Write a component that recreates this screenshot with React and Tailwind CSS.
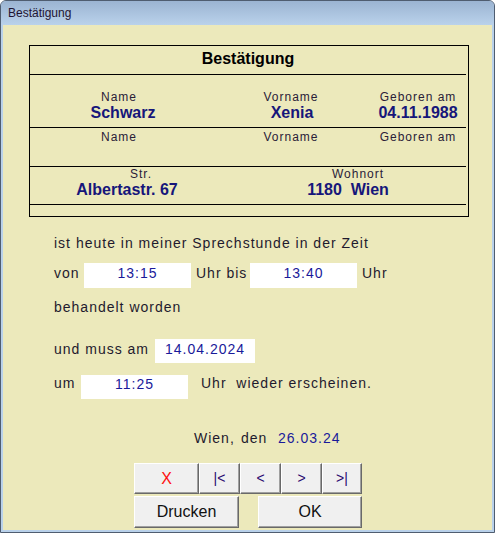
import React from 'react';

// ============================================
// BESTÄTIGUNG DIALOG
// ============================================

const FONT = { fontFamily: "'Liberation Sans', Arial, sans-serif" };

function Cell({ w, className = '', children }) {
  return (
    <div className={`shrink-0 text-center whitespace-pre ${w} ${className}`}>{children}</div>
  );
}

function Label({ w, children }) {
  return (
    <Cell w={w} className="text-[12px] leading-[13px] tracking-[1px] text-[#2a2038]">
      {children}
    </Cell>
  );
}

function Value({ w, children }) {
  return (
    <Cell w={w} className="text-[16px] leading-[18px] font-bold text-[#16167a]">
      {children}
    </Cell>
  );
}

function Field({ w, pt = 'pt-[2px]', h = 'h-[25px]', children }) {
  return (
    <div className={`shrink-0 bg-white text-center text-[14px] leading-[16px] tracking-[1px] text-[#1a1a9a] ${w} ${h} ${pt}`}>
      {children}
    </div>
  );
}

function Btn({ w, h, className = '', children }) {
  return (
    <button
      className={`shrink-0 bg-[#f0f0f0] border-t border-l border-white border-r border-b border-r-[#696969] border-b-[#696969] shadow-[inset_-1px_-1px_0_#a0a0a0] flex items-center justify-center ${w} ${h} ${className}`}
    >
      {children}
    </button>
  );
}

export default function App() {
  return (
    <div
      className="w-[495px] h-[533px] flex flex-col bg-[#b9d1ea] border border-[#4f5d70] rounded-t-[6px] overflow-hidden"
      style={FONT}
    >
      {/* title bar */}
      <div className="h-[24px] shrink-0 flex items-center px-[7px] bg-gradient-to-b from-[#9bb4d2] to-[#bad2eb]">
        <span className="text-[12px] text-[#1e1432]">Bestätigung</span>
      </div>

      {/* client area */}
      <div className="flex-1 mx-[2px] mb-[2px] bg-[#ece9bb] text-[#1f1a2e]">
        {/* header table */}
        <div className="ml-[26px] mt-[20px] w-[440px] h-[172px] border border-black flex flex-col">
          <div className="h-[29px] mr-[2px] border-b border-black flex items-center justify-center pb-[2px]">
            <span className="text-[16px] font-bold text-black">Bestätigung</span>
          </div>

          <div className="h-[53px] mr-[2px] border-b border-black pt-[16px]">
            <div className="flex">
              <Label w="w-[178px]">Name</Label>
              <Label w="w-[166px]">Vorname</Label>
              <Label w="w-[88px]">Geboren am</Label>
            </div>
            <div className="flex">
              <Value w="w-[186px]">Schwarz</Value>
              <Value w="w-[152px]">Xenia</Value>
              <Value w="w-[100px]">04.11.1988</Value>
            </div>
          </div>

          <div className="h-[39px] mr-[2px] border-b border-black pt-[3px]">
            <div className="flex">
              <Label w="w-[178px]">Name</Label>
              <Label w="w-[166px]">Vorname</Label>
              <Label w="w-[88px]">Geboren am</Label>
            </div>
          </div>

          <div className="h-[38px] mr-[2px] border-b border-black pt-[1px]">
            <div className="flex">
              <Label w="w-[222px]">Str.</Label>
              <Label w="w-[212px]">Wohnort</Label>
            </div>
            <div className="flex">
              <Value w="w-[194px]">Albertastr. 67</Value>
              <Value w="w-[248px]">{'1180  Wien'}</Value>
            </div>
          </div>

          <div className="flex-1" />
        </div>

        {/* text body */}
        <div className="pl-[51px] text-[14px] leading-[16px] tracking-[1px] whitespace-pre">
          <div className="mt-[18px] h-[16px]">ist heute in meiner Sprechstunde in der Zeit</div>

          <div className="mt-[12px] flex items-start h-[25px]">
            <span className="w-[30px] mt-[2px] shrink-0">von</span>
            <Field w="w-[107px]">13:15</Field>
            <span className="w-[54px] ml-[5px] mt-[2px] shrink-0">Uhr bis</span>
            <Field w="w-[107px]">13:40</Field>
            <span className="ml-[5px] mt-[2px]">Uhr</span>
          </div>

          <div className="mt-[11px] h-[16px]">behandelt worden</div>

          <div className="mt-[24px] flex items-start h-[24px]">
            <span className="w-[101px] mt-[2px] shrink-0">und muss am</span>
            <Field w="w-[100px]" h="h-[24px]">14.04.2024</Field>
          </div>

          <div className="mt-[12px] flex items-start h-[24px]">
            <span className="w-[27px] shrink-0">um</span>
            <Field w="w-[107px]" h="h-[24px]" pt="pt-[1px]">11:25</Field>
            <span className="ml-[13px]">{'Uhr  wieder erscheinen.'}</span>
          </div>

          <div className="mt-[31px] h-[16px] flex pl-[140px]">
            <span className="w-[47px] shrink-0">Wien,</span>
            <span className="w-[37px] shrink-0">den</span>
            <span className="text-[#1a1a9a]">26.03.24</span>
          </div>
        </div>

        {/* buttons */}
        <div className="ml-[131px] mt-[17px] flex flex-col gap-[2px]">
          <div className="flex">
            <Btn w="w-[65px]" h="h-[31px]" className="text-[16px] text-[#ff1010]">X</Btn>
            <Btn w="w-[41px]" h="h-[31px]" className="text-[14px] text-[#2a0a70]">|&lt;</Btn>
            <Btn w="w-[41px]" h="h-[31px]" className="text-[14px] text-[#2a0a70]">&lt;</Btn>
            <Btn w="w-[41px]" h="h-[31px]" className="text-[14px] text-[#2a0a70]">&gt;</Btn>
            <Btn w="w-[40px]" h="h-[31px]" className="text-[14px] text-[#2a0a70]">&gt;|</Btn>
          </div>
          <div className="flex">
            <Btn w="w-[105px]" h="h-[32px]" className="text-[16px] text-[#111]">Drucken</Btn>
            <Btn w="w-[104px]" h="h-[32px]" className="ml-[19px] text-[16px] text-[#111]">OK</Btn>
          </div>
        </div>
      </div>
    </div>
  );
}
